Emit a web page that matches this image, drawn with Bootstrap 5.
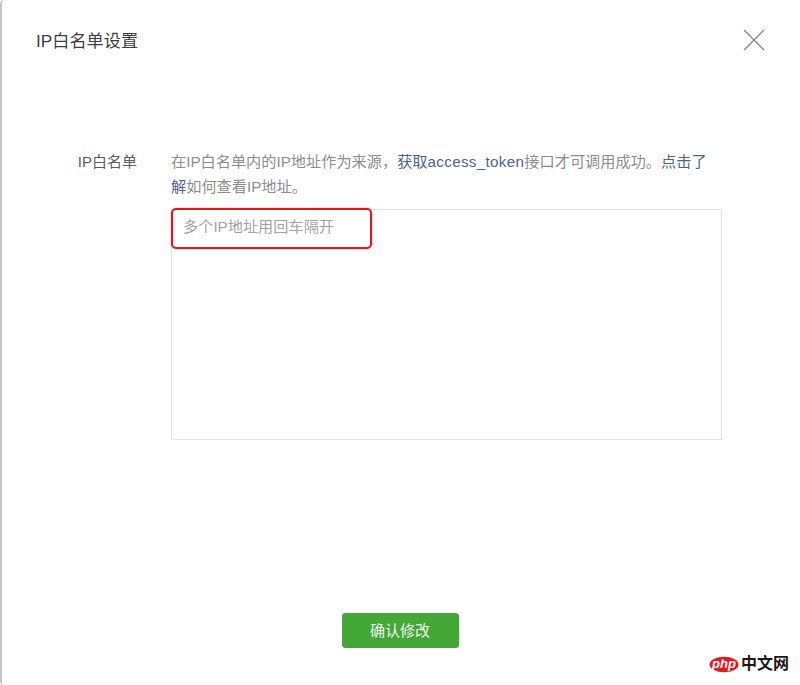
<!doctype html>
<html lang="zh-CN">
<head>
<meta charset="utf-8">
<title>IP白名单设置</title>
<link href="https://cdn.jsdelivr.net/npm/bootstrap@5.3.0/dist/css/bootstrap.min.css" rel="stylesheet">
<style>
html,body{height:100%;margin:0;overflow:hidden;background:#fff}
body{font-family:"Liberation Sans","Noto Sans CJK SC",sans-serif;-webkit-font-smoothing:antialiased}
.dlg{width:800px;height:685px;position:relative;border:0;border-left:2px solid #c4c4c4;border-radius:4px 0 0 4px;background:#fff;display:flex;flex-direction:column}
.dlg-head{display:flex;justify-content:space-between;align-items:center;padding:27px 35px 0 34px;height:53px}
.dlg-title{font-size:17.2px;line-height:26px;font-weight:400;color:#3e3e3e;margin:0;padding-top:2px}
.x-btn{background:none;border:0;padding:0;width:22px;height:22px;line-height:0;display:block}
.dlg-form{display:flex;margin-top:96px;padding-right:77px}
.lbl{width:169px;padding-right:34px;text-align:right;font-size:15px;line-height:25px;color:#5c5c5c;flex:none;margin:0}
.fld{flex:1;min-width:0;position:relative}
.hint{font-size:15.2px;line-height:25px;color:#8d8d8d;margin:0 0 10px;padding-right:8px}
.hint a{color:#4f6392;text-decoration:none}
.tok{letter-spacing:.33px}
.ta{display:block;width:551px;height:231px;border:1px solid #e3e3e3;border-radius:0;padding:5px 11px;font-size:15.2px;line-height:24px;color:#444;resize:none;box-shadow:none}
.ta::placeholder{color:#a3a3a3;opacity:1}
.hl{position:absolute;left:0;top:59px;width:201px;height:41px;border:2px solid #e8141c;border-radius:5px;box-shadow:0 0 2px rgba(200,0,0,.35);pointer-events:none}
.foot{margin-top:auto;padding-bottom:37px;display:flex;justify-content:center;padding-right:2px}
.ok-btn{width:117px;height:35px;padding:0;background:#43a836;border:1px solid #43a836;border-radius:3px;color:#f2f8f0;font-size:15px;line-height:33px}
.wm{position:absolute;right:11px;bottom:12px;display:flex;align-items:center;gap:2px}
.wm-cn{font-size:16px;font-weight:700;line-height:18px;color:#1a1a1a;letter-spacing:0}
.wm-php{font-family:"Liberation Sans",sans-serif;font-style:italic;font-weight:700}
</style>
</head>
<body>
<div class="dlg">
  <div class="dlg-head">
    <h1 class="dlg-title">IP白名单设置</h1>
    <button class="x-btn" type="button" aria-label="关闭">
      <svg width="22" height="22" viewBox="0 0 22 22"><path d="M1 1 21 21M21 1 1 21" stroke="#8a8a8a" stroke-width="1.4" fill="none"/></svg>
    </button>
  </div>
  <form class="dlg-form" onsubmit="return false">
    <label class="lbl" for="ips">IP白名单</label>
    <div class="fld">
      <p class="hint">在IP白名单内的IP地址作为来源，<a href="#">获取<span class="tok">access_token</span></a>接口才可调用成功。<a href="#">点击了解</a>如何查看IP地址。</p>
      <textarea id="ips" class="form-control ta" placeholder="多个IP地址用回车隔开"></textarea>
      <div class="hl"></div>
    </div>
  </form>
  <div class="foot">
    <button class="btn ok-btn" type="button">确认修改</button>
  </div>
  <div class="wm">
    <svg width="30" height="17" viewBox="0 0 30 17"><ellipse cx="15" cy="8.5" rx="14.5" ry="7.8" fill="#e5191f"/><text x="15" y="12" text-anchor="middle" font-size="13" fill="#fff" class="wm-php">php</text></svg>
    <span class="wm-cn">中文网</span>
  </div>
</div>
</body>
</html>
